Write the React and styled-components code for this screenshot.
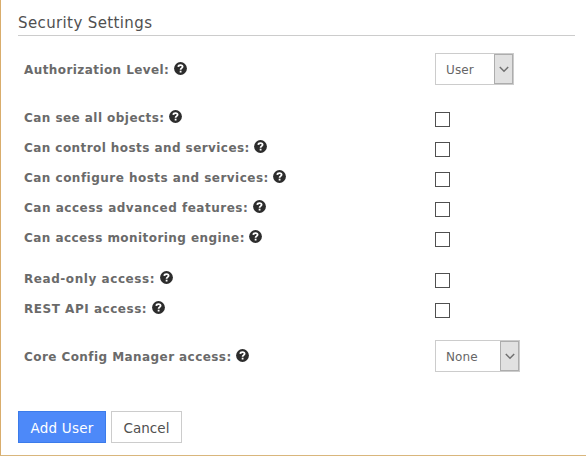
import React from "react";
import styled, { createGlobalStyle } from "styled-components";

const GlobalStyle = createGlobalStyle`
  * { box-sizing: border-box; }
  body { margin: 0; background: #fff; font-family: "DejaVu Sans", Verdana, sans-serif; }
`;

const Panel = styled.main`
  width: 586px;
  height: 456px;
  padding: 8px 11px 0 17px;
  border-left: 1px solid #d9ad6c;
  border-bottom: 1px solid #d9b67c;
  overflow: hidden;
`;

const Heading = styled.h1`
  height: 28px;
  margin: 0;
  border-bottom: 1px solid #ccc;
  font-size: 15px;
  font-weight: 400;
  line-height: 31px;
  letter-spacing: 0.38px;
  color: #505050;
`;

const Group = styled.section`
  margin-top: ${(p) => p.$gap}px;
`;

const Row = styled.div`
  display: grid;
  grid-template-columns: 411px 1fr;
  height: ${(p) => p.$height || 30}px;
  padding-left: 6px;
  align-items: center;
`;

const Label = styled.label`
  display: flex;
  align-items: center;
  height: 16px;
  margin-top: ${(p) => p.$shift ?? -2}px;
  gap: 4.5px;
  font-size: 12px;
  font-weight: 700;
  line-height: 16px;
  letter-spacing: ${(p) => p.$spacing}px;
  white-space: nowrap;
  color: #6a6a6a;
`;

const HelpSvg = styled.svg`
  width: 13px;
  height: 13px;
  margin-top: -3px;
  flex: none;
`;

const Checkbox = styled.input`
  appearance: none;
  width: 15px;
  height: 15px;
  margin: 0;
  border: 1px solid #505050;
  background: #fff;
`;

const Select = styled.button`
  display: flex;
  justify-content: space-between;
  width: ${(p) => p.$width}px;
  height: 32px;
  padding: 0 0 0 10px;
  border: 1px solid #ccc;
  background: #fff;
  font: 12px/32px "DejaVu Sans", Verdana, sans-serif;
  letter-spacing: 0.1px;
  color: #666;
`;

const Arrow = styled.span`
  display: grid;
  place-items: center;
  width: 19px;
  height: 30px;
  border: 1px solid #adadad;
  background: #e1e1e1;
`;

const Actions = styled.div`
  display: flex;
  gap: 5px;
  margin-top: 39px;
`;

const Button = styled.button`
  width: ${(p) => p.$width}px;
  height: 32px;
  padding: 1px 0 0;
  border: 1px solid ${(p) => (p.$primary ? "#3b7bea" : "#ccc")};
  background: ${(p) => (p.$primary ? "#4d89f9" : "#fff")};
  font: 13.5px/30px "DejaVu Sans", Verdana, sans-serif;
  letter-spacing: ${(p) => (p.$primary ? 0.2 : 0.05)}px;
  color: ${(p) => (p.$primary ? "#fff" : "#505050")};
`;

function HelpIcon() {
  return (
    <HelpSvg viewBox="0 0 13 13" fill="none">
      <circle cx="6.5" cy="6.5" r="6.4" fill="#2c2c2c" />
      <path d="M4.3 4.8C4.5 2.6 8.6 2.7 8.6 4.8 8.6 6.2 6.6 6.1 6.6 7.8" stroke="#fff" strokeWidth="1.8" />
      <path d="M5.7 8.7h1.8v1.8H5.7z" fill="#fff" />
    </HelpSvg>
  );
}

function FieldLabel({ text, spacing, shift }) {
  return (
    <Label $spacing={spacing} $shift={shift}>
      <span>{text}</span>
      <HelpIcon />
    </Label>
  );
}

function Dropdown({ value, width }) {
  return (
    <Select $width={width} type="button">
      {value}
      <Arrow>
        <svg width="10" height="7" viewBox="0 0 10 7" fill="none" stroke="#707070" strokeWidth="1.5">
          <path d="M.8 1 5 5.2 9.2 1" />
        </svg>
      </Arrow>
    </Select>
  );
}

const permissions = [
  { text: "Can see all objects:", spacing: 0.45 },
  { text: "Can control hosts and services:", spacing: 0.43 },
  { text: "Can configure hosts and services:", spacing: 0.48 },
  { text: "Can access advanced features:", spacing: 0.51 },
  { text: "Can access monitoring engine:", spacing: 0.44 },
];

const access = [
  { text: "Read-only access:", spacing: 0.56 },
  { text: "REST API access:", spacing: 0.53 },
];

function CheckRows({ items }) {
  return items.map(({ text, spacing }) => (
    <Row key={text}>
      <FieldLabel text={text} spacing={spacing} />
      <Checkbox type="checkbox" aria-label={text} />
    </Row>
  ));
}

export default function App() {
  return (
    <>
      <GlobalStyle />
      <Panel>
        <Heading>Security Settings</Heading>
        <Group $gap={17}>
          <Row $height={32}>
            <FieldLabel text="Authorization Level:" spacing={0.42} shift={2} />
            <Dropdown value="User" width={79} />
          </Row>
        </Group>
        <Group $gap={19}>
          <CheckRows items={permissions} />
        </Group>
        <Group $gap={11}>
          <CheckRows items={access} />
        </Group>
        <Group $gap={15}>
          <Row $height={32}>
            <FieldLabel text="Core Config Manager access:" spacing={0.43} shift={2} />
            <Dropdown value="None" width={85} />
          </Row>
        </Group>
        <Actions>
          <Button $primary $width={88}>Add User</Button>
          <Button $width={71}>Cancel</Button>
        </Actions>
      </Panel>
    </>
  );
}
